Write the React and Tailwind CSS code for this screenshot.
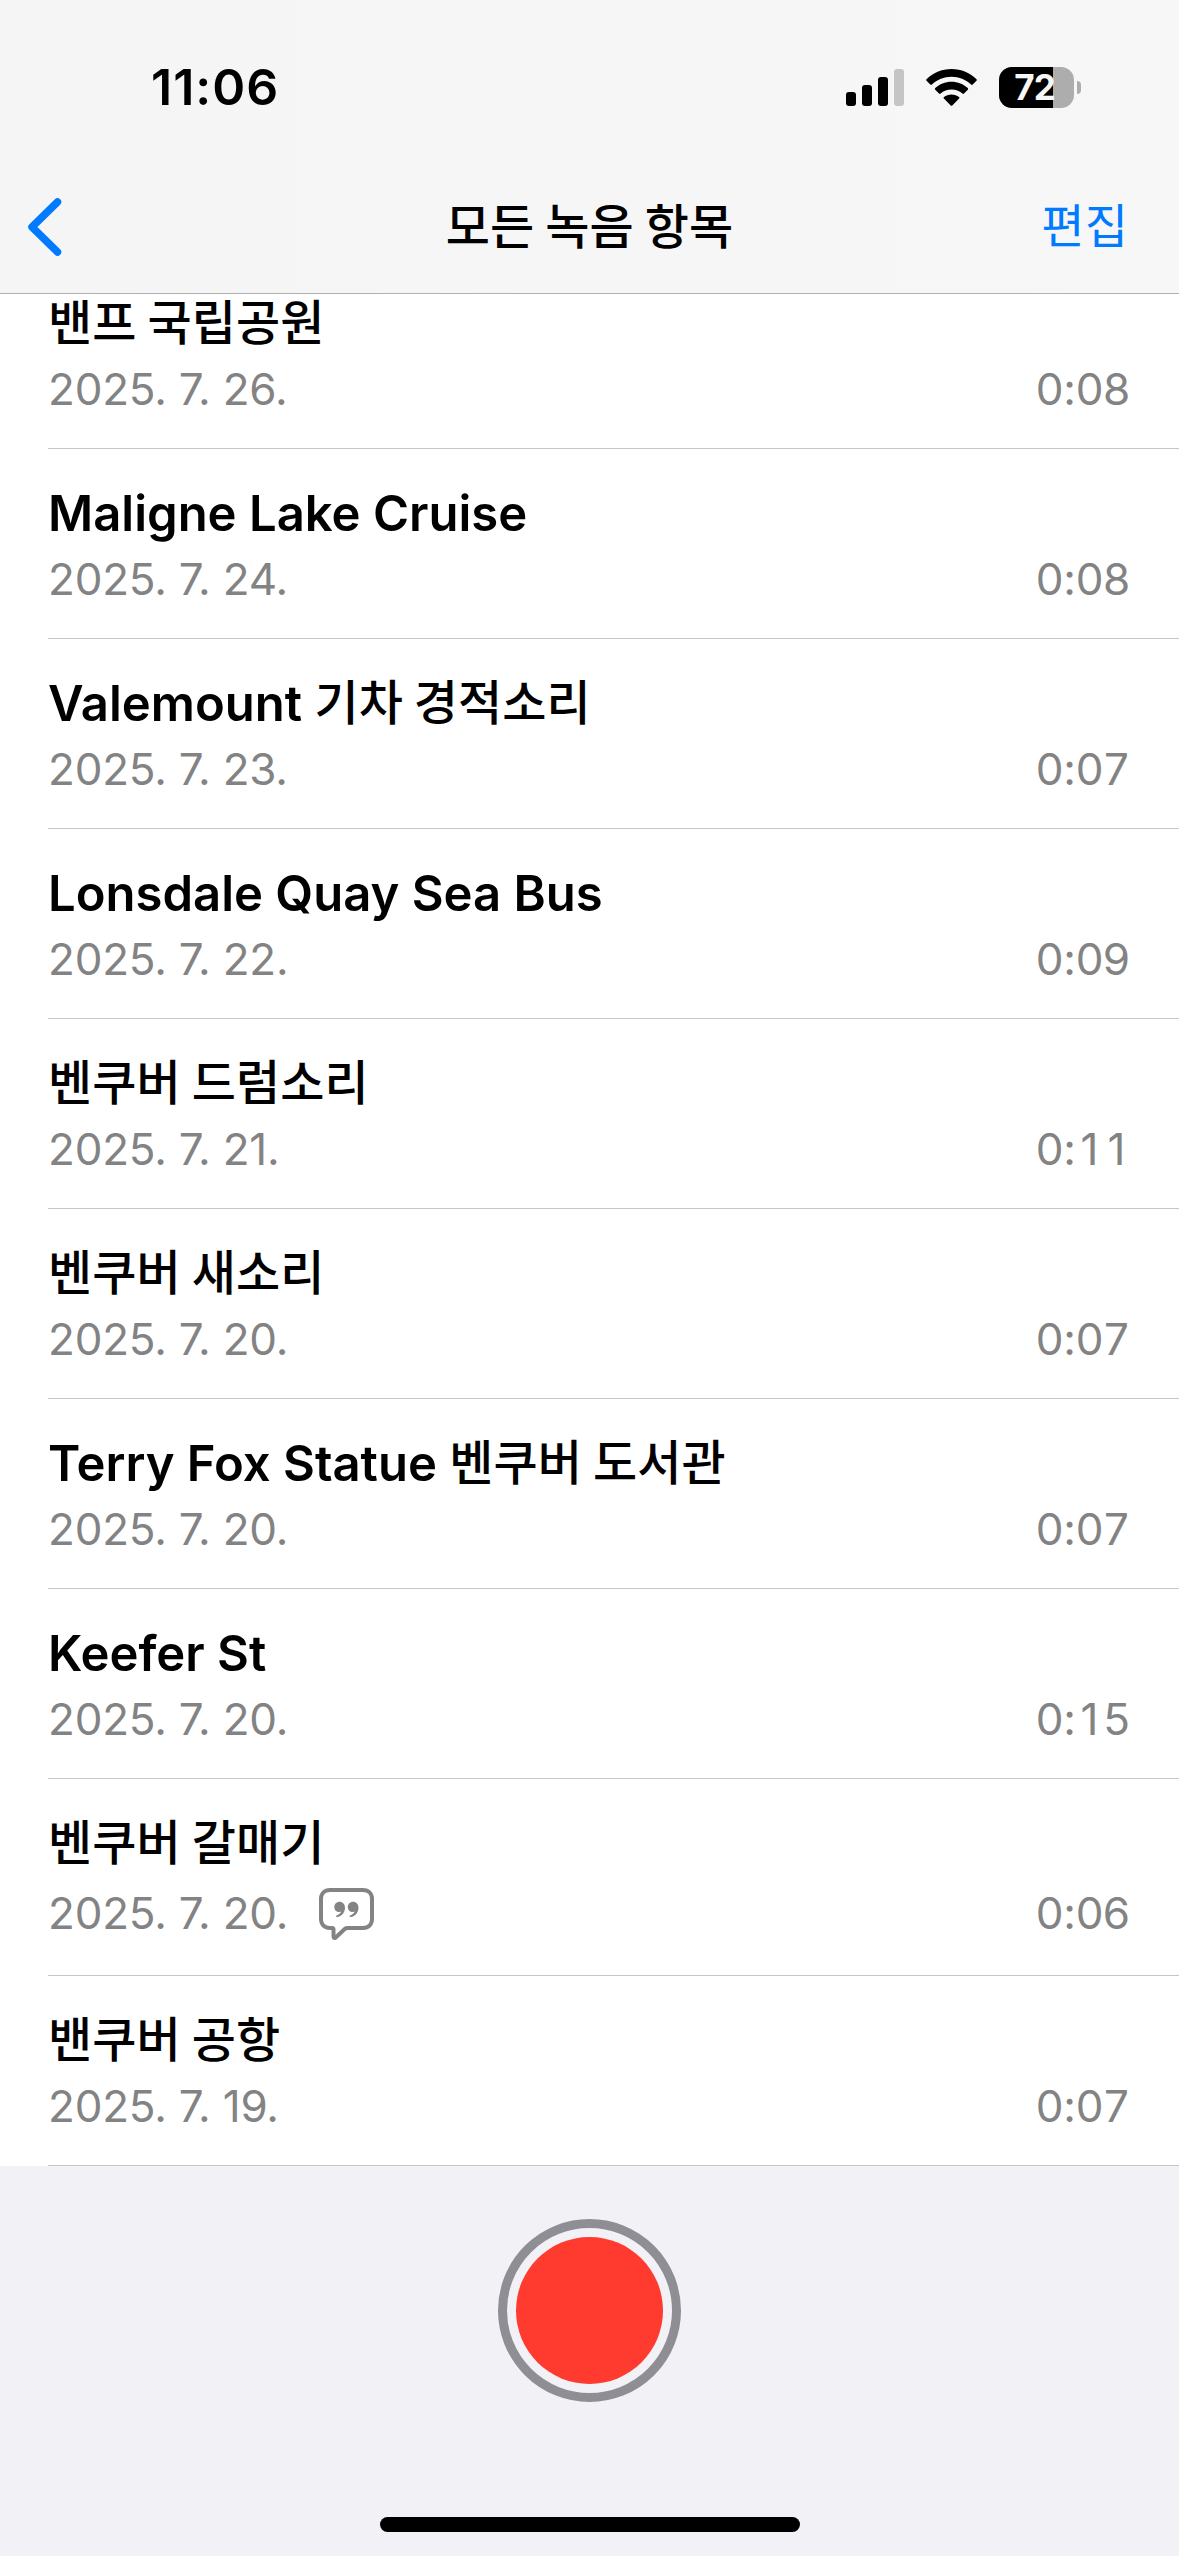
import clsx from "clsx";

const RECORDINGS = [
  { title: "밴프 국립공원", date: "2025. 7. 26.", duration: "0:08" },
  { title: "Maligne Lake Cruise", date: "2025. 7. 24.", duration: "0:08" },
  { title: "Valemount 기차 경적소리", date: "2025. 7. 23.", duration: "0:07" },
  { title: "Lonsdale Quay Sea Bus", date: "2025. 7. 22.", duration: "0:09" },
  { title: "벤쿠버 드럼소리", date: "2025. 7. 21.", duration: "0:11" },
  { title: "벤쿠버 새소리", date: "2025. 7. 20.", duration: "0:07" },
  {
    title: "Terry Fox Statue 벤쿠버 도서관",
    date: "2025. 7. 20.",
    duration: "0:07",
  },
  { title: "Keefer St", date: "2025. 7. 20.", duration: "0:15" },
  {
    title: "벤쿠버 갈매기",
    date: "2025. 7. 20.",
    duration: "0:06",
    transcript: true,
  },
  { title: "밴쿠버 공항", date: "2025. 7. 19.", duration: "0:07" },
];

// Hangul runs get their own font size so both scripts look equally tall
const MixedText = ({ text, className }) =>
  text.split(/([가-힣]+(?: [가-힣]+)*)/).map((part, i) =>
    i % 2 ? (
      <span
        key={i}
        className={clsx(
          "align-[1px] font-['Noto_Sans_CJK_KR',sans-serif] leading-none tracking-[0.1px]",
          className
        )}
      >
        {part}
      </span>
    ) : (
      part
    )
  );

const SignalIcon = () => (
  <svg width="58" height="37" viewBox="0 0 58 37">
    <rect x="0" y="23" width="10" height="14" rx="3" />
    <rect x="16" y="16" width="10" height="21" rx="3" />
    <rect x="32" y="8" width="10" height="29" rx="3" />
    <rect x="48" y="0" width="10" height="37" rx="3" fill="#c5c5c5" />
  </svg>
);

const WifiIcon = () => (
  <svg width="51" height="37" viewBox="0 0 51 37">
    <path d="M25.5 0C35.3 0 44.200 3.800 50.500 10.200C51 10.700 51 11.200 50.500 11.700L46.700 15.500C46.200 16 45.600 16 45.100 15.500C39.900 10.600 33.100 7.700 25.500 7.700C17.900 7.700 11.100 10.600 5.900 15.500C5.400 16 4.800 16 4.300 15.500L0.500 11.700C0 11.200 0 10.700 0.500 10.200C6.800 3.800 15.700 0 25.500 0Z" />
    <path d="M25.5 12.800C31.800 12.800 37.500 15.200 41.800 19.100C42.300 19.600 42.300 20.200 41.800 20.700L38 24.500C37.500 25 36.900 25 36.400 24.500C33.500 22 29.700 20.500 25.500 20.500C21.300 20.500 17.500 22 14.600 24.500C14.100 25 13.500 25 13 24.500L9.200 20.700C8.700 20.200 8.700 19.600 9.200 19.100C13.500 15.200 19.200 12.800 25.500 12.800Z" />
    <path d="M25.5 25.500C28.400 25.500 31 26.500 33 28.100C33.600 28.600 33.600 29.100 33.100 29.600L26.300 36.400C25.800 36.900 25.200 36.900 24.700 36.400L17.900 29.600C17.400 29.100 17.400 28.600 18 28.100C20 26.500 22.600 25.500 25.500 25.500Z" />
  </svg>
);

const Battery = ({ level }) => (
  <div className="flex items-center gap-[3px]">
    <div className="relative flex h-[41px] w-[75px] items-center justify-center overflow-hidden rounded-[13px] bg-[#adadad]">
      <div
        className="absolute inset-y-0 left-0 bg-black"
        style={{ width: `${level}%` }}
      />
      <span className="relative mr-1 text-[35px] leading-none font-bold tracking-[-1px] text-[#f7f7f7]">
        {level}
      </span>
    </div>
    <div className="h-[13px] w-1 rounded-r-full bg-[#adadad]" />
  </div>
);

const TranscriptIcon = () => (
  <svg
    width="55"
    height="59"
    viewBox="0 0 55 59"
    fill="none"
    className="ml-[31px] text-[#838383]"
  >
    <path
      d="M11 7H44C49.500 7 53 10.500 53 16V36C53 41.500 49.500 45 44 45H28.500C27.300 45 26.500 45.300 25.700 46L17 54.300C15.800 55.500 14.500 55 14.500 53.500V46.500C14.500 45.500 14 45 13 45H11C5.500 45 2 41.500 2 36V16C2 10.500 5.500 7 11 7Z"
      stroke="currentColor"
      strokeWidth="4"
      strokeLinejoin="round"
    />
    <g fill="currentColor">
      <path d="M20.500 18.700C23.700 18.700 26 21.200 26 24.700C26 29.500 22.800 33.200 18.200 34.100C17 34.300 16.600 32.900 17.600 32.500C19.800 31.700 21.600 30.300 22.200 28.600C21.700 28.900 21.100 29 20.300 29C17.500 29 15.300 26.800 15.300 23.900C15.300 21 17.600 18.700 20.500 18.700Z" />
      <path d="M34 18.700C37.200 18.700 39.500 21.200 39.500 24.700C39.500 29.500 36.300 33.200 31.700 34.100C30.500 34.300 30.100 32.900 31.100 32.500C33.300 31.700 35.100 30.300 35.700 28.600C35.200 28.900 34.600 29 33.800 29C31 29 28.800 26.800 28.800 23.900C28.800 21 31.100 18.700 34 18.700Z" />
    </g>
  </svg>
);

// Equal-width cells: Inter's tabular "1" has a foot serif, the plain one has not
const Duration = ({ value }) => (
  <span className="flex tracking-normal">
    {value.split("").map((char, i) => (
      <span
        key={i}
        className={clsx(
          "flex justify-center",
          char === ":" ? "w-[13px]" : "w-[27px]"
        )}
      >
        {char}
      </span>
    ))}
  </span>
);

const RecordingRow = ({ title, date, duration, transcript }) => (
  <li className="ml-12 border-b border-[#c6c6c8] pt-[35px] pr-[49px] pb-[33px]">
    <h2 className="text-[49px] leading-[60px] font-semibold whitespace-nowrap">
      <MixedText text={title} className="text-[48px] font-medium" />
    </h2>
    <div className="mt-[9px] flex items-center justify-between text-[44px] leading-[52px] tracking-[-0.2px] text-[#838383]">
      <div className="flex items-center">
        <span>{date}</span>
        {transcript && <TranscriptIcon />}
      </div>
      <Duration value={duration} />
    </div>
  </li>
);

const App = () => {
  return (
    <div className="flex h-[2556px] w-[1179px] flex-col overflow-hidden bg-white font-['Inter',sans-serif] text-black">
      <header className="z-10 h-[294px] shrink-0 border-b border-[#b2b2b2] bg-linear-to-r from-[#f5f5f5] to-[#f7f7f7]">
        <div className="flex h-[174px] items-center justify-between pr-[98px] pl-[151px]">
          <span className="text-[50px] leading-none font-semibold tracking-[1px]">
            11:06
          </span>
          <div className="flex items-center gap-[22px]">
            <SignalIcon />
            <WifiIcon />
            <Battery level={72} />
          </div>
        </div>
        <nav className="grid h-[106px] grid-cols-[1fr_auto_1fr] items-center pr-[51px] pl-[51px] text-[49px]">
          <button aria-label="Back" className="-ml-[23px] justify-self-start">
            <svg width="34" height="58" viewBox="0 0 34 58" fill="none">
              <path
                d="M29.500 4L4 29L29.500 54"
                stroke="#007aff"
                strokeWidth="7.500"
                strokeLinecap="round"
                strokeLinejoin="round"
              />
            </svg>
          </button>
          <h1 className="pt-0.5 leading-[60px]">
            <MixedText
              text="모든 녹음 항목"
              className="text-[48px] font-medium"
            />
          </h1>
          <button className="justify-self-end leading-[60px] text-[#007aff]">
            <MixedText text="편집" className="text-[47px] font-normal" />
          </button>
        </nav>
      </header>

      {/* the list is scrolled, so its first row starts under the header */}
      <ul className="-mt-[35px] grow">
        {RECORDINGS.map((recording) => (
          <RecordingRow key={recording.title} {...recording} />
        ))}
      </ul>

      <footer className="flex h-[390px] shrink-0 flex-col items-center justify-between bg-[#f2f1f6] pt-[53px] pb-6">
        <button
          aria-label="Record"
          className="size-[183px] rounded-full border-[9px] border-[#8f8e94] p-[9px]"
        >
          <div className="size-full rounded-full bg-[#ff3b30]" />
        </button>
        <div className="h-[15px] w-[420px] rounded-full bg-black" />
      </footer>
    </div>
  );
};

export default App;
